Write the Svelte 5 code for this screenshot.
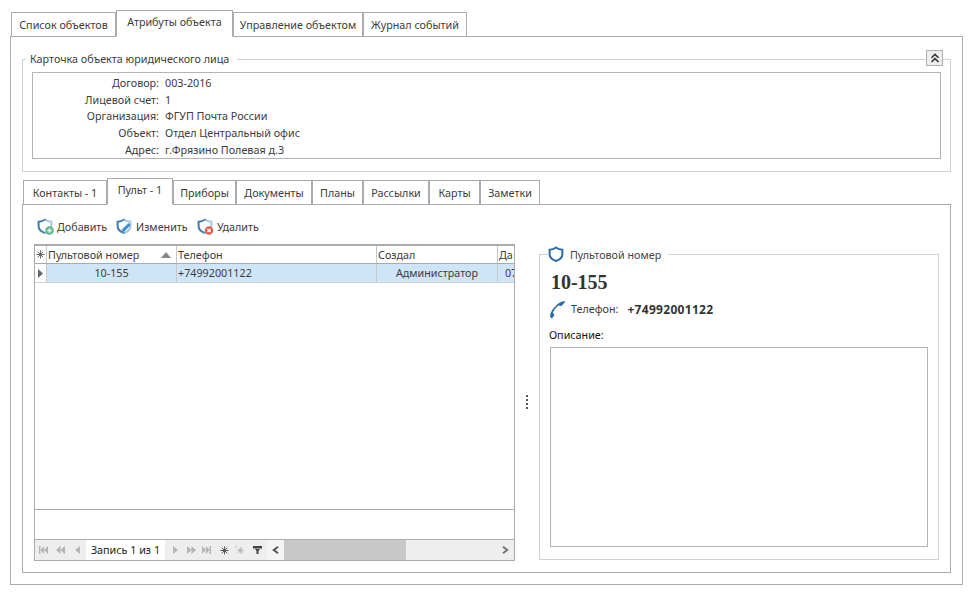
<script>
  const topTabs = [
    { t: 'Список объектов', w: 105 },
    { t: 'Атрибуты объекта', w: 117, on: true },
    { t: 'Управление объектом', w: 130 },
    { t: 'Журнал событий', w: 104 }
  ];
  const innerTabs = [
    { t: 'Контакты - 1', w: 84 },
    { t: 'Пульт - 1', w: 66, on: true },
    { t: 'Приборы', w: 63 },
    { t: 'Документы', w: 76 },
    { t: 'Планы', w: 51 },
    { t: 'Рассылки', w: 66 },
    { t: 'Карты', w: 51 },
    { t: 'Заметки', w: 60 }
  ];
  const rows = [
    ['Договор:', '003-2016'],
    ['Лицевой счет:', '1'],
    ['Организация:', 'ФГУП Почта России'],
    ['Объект:', 'Отдел Центральный офис'],
    ['Адрес:', 'г.Фрязино Полевая д.3']
  ];
  const shield = 'M8 1.500C6.200 3 3.800 3.700 1.600 3.700V8c0 3.300 2.600 5.700 6.400 7 3.800-1.300 6.400-3.700 6.400-7V3.700C12.200 3.700 9.800 3 8 1.500Z';
</script>

<div class="page">
  <svg class="defs" width="0" height="0" aria-hidden="true">
    <defs>
      <linearGradient id="sh" x1="0" y1="0" x2="1" y2="0">
        <stop offset="0.35" stop-color="#3f7cab"/>
        <stop offset="0.65" stop-color="#a8c6dc"/>
      </linearGradient>
    </defs>
  </svg>
  <div class="tabs">
    {#each topTabs as tab}
      <div class="tab" class:on={tab.on} style="width:{tab.w}px">{tab.t}</div>
    {/each}
  </div>
  <div class="panel outer">
    <fieldset class="card">
      <legend>Карточка объекта юридического лица</legend>
      <button class="collapse" aria-label="Свернуть">
        <svg width="10" height="10" viewBox="0 0 10 10" fill="none" stroke="#333" stroke-width="1.5"><path d="M1.500 4.800 5 1.400l3.500 3.400M1.500 9 5 5.600 8.500 9"/></svg>
      </button>
      <div class="info">
        {#each rows as r}
          <div class="info-row"><span class="lbl">{r[0]}</span><span>{r[1]}</span></div>
        {/each}
      </div>
    </fieldset>

    <div class="tabs inner-tabs">
      {#each innerTabs as tab}
        <div class="tab" class:on={tab.on} style="width:{tab.w}px">{tab.t}</div>
      {/each}
    </div>
    <div class="panel inner">
      <div class="toolbar">
        <span class="tool add">
          <svg width="17" height="17" viewBox="0 0 17 17"><path d={shield} fill="#fff" stroke="url(#sh)" stroke-width="2"/><circle cx="12.500" cy="12.500" r="4.200" fill="#5cb58a"/><path d="M12.500 10.300v4.400M10.300 12.500h4.400" stroke="#fff" stroke-width="1.400"/></svg>
          Добавить
        </span>
        <span class="tool edit">
          <svg width="17" height="17" viewBox="0 0 17 17"><path d={shield} fill="#fff" stroke="url(#sh)" stroke-width="2"/><path d="M5.500 14l.7-2.800 6.300-6.300 2.200 2.200-6.300 6.300z" fill="#3f8fd0"/></svg>
          Изменить
        </span>
        <span class="tool del">
          <svg width="17" height="17" viewBox="0 0 17 17"><path d={shield} fill="#fff" stroke="url(#sh)" stroke-width="2"/><circle cx="12" cy="12.500" r="4.200" fill="#e0604f"/><path d="M10.400 10.900l3.200 3.200M13.600 10.900l-3.200 3.200" stroke="#fff" stroke-width="1.400"/></svg>
          Удалить
        </span>
      </div>
      <div class="work">
        <div class="grid">
          <div class="g-head">
            <div class="c c0 star">
              <svg width="9" height="9" viewBox="0 0 9 9" stroke="#666" stroke-width="1"><path d="M4.500 0.500v8M0.500 4.500h8M1.700 1.700l5.600 5.600M7.300 1.700l-5.600 5.600"/></svg>
            </div>
            <div class="c c1 sort">Пультовой номер<svg width="10" height="6" viewBox="0 0 10 6"><path d="M5 0l5 6H0z" fill="#888"/></svg></div>
            <div class="c c2">Телефон</div>
            <div class="c c3">Создал</div>
            <div class="c c4">Да</div>
          </div>
          <div class="g-row">
            <div class="c c0 ind"><svg width="5" height="9" viewBox="0 0 5 9"><path d="M0 0l5 4.500L0 9z" fill="#666"/></svg></div>
            <div class="c c1 mid">10-155</div>
            <div class="c c2">+74992001122</div>
            <div class="c c3 mid">Администратор</div>
            <div class="c c4 clip">07</div>
          </div>
          <div class="g-body"></div>
          <div class="g-foot"></div>
          <div class="g-nav">
            <div class="nav-l">
              <svg class="n" style="margin-left:4px" width="9" height="8" viewBox="0 0 9 8" fill="#b4b4b4"><path d="M0 0h1.500v8H0zM5 0v8L1.500 4zM9 0v8L5 4z"/></svg>
              <svg class="n" style="margin-left:8px" width="9" height="8" viewBox="0 0 9 8" fill="#b4b4b4"><path d="M4.500 0v8L0 4zM9 0v8L4.500 4z"/></svg>
              <svg class="n" style="margin-left:10px" width="5" height="8" viewBox="0 0 5 8" fill="#b4b4b4"><path d="M5 0v8L0 4z"/></svg>
            </div>
            <div class="rec">Запись 1 из 1</div>
            <div class="nav-r">
              <svg class="n" style="margin-left:8px" width="5" height="8" viewBox="0 0 5 8" fill="#b4b4b4"><path d="M0 0v8l5-4z"/></svg>
              <svg class="n" style="margin-left:9px" width="9" height="8" viewBox="0 0 9 8" fill="#b4b4b4"><path d="M0 0v8l4.500-4zM4.500 0v8L9 4z"/></svg>
              <svg class="n" style="margin-left:6px" width="9" height="8" viewBox="0 0 9 8" fill="#b4b4b4"><path d="M0 0v8l3.800-4zM3.800 0v8l3.700-4zM7.500 0H9v8H7.500z"/></svg>
              <svg class="n" style="margin-left:9px" width="9" height="9" viewBox="0 0 9 9" stroke="#555" stroke-width="1"><path d="M4.500 0.500v8M0.500 4.500h8M1.700 1.700l5.600 5.600M7.300 1.700l-5.600 5.600"/></svg>
              <svg class="n" style="margin-left:6px" width="10" height="10" viewBox="0 0 10 10" stroke="#bbb" stroke-width="1"><path d="M5.500 2v7M2 5.500h7M3 3l5 5M8 3l-5 5M1 .5v2.500"/></svg>
              <svg class="n" style="margin-left:8px" width="9" height="8" viewBox="0 0 9 8" fill="#444"><path d="M0 0h9v2.500H0zM2 3h5L5.500 5v3h-2V5z"/></svg>
            </div>
            <div class="sb-btn"><svg width="7" height="8" viewBox="0 0 7 8" fill="none" stroke="#555" stroke-width="2"><path d="M6 .8 1.800 4 6 7.200"/></svg></div>
            <div class="sb-thumb"></div>
            <div class="sb-track"><svg width="7" height="8" viewBox="0 0 7 8" fill="none" stroke="#777" stroke-width="2"><path d="M1 .8 5.200 4 1 7.200"/></svg></div>
          </div>
        </div>
        <div class="splitter"><i></i><i></i><i></i><i></i></div>
        <fieldset class="detail">
          <legend>
            <svg width="16" height="17" viewBox="0 0 16 17"><path d={shield} fill="#fff" stroke="#2f6ea5" stroke-width="2"/></svg>
            <span>Пультовой номер</span>
          </legend>
          <div class="num">10-155</div>
          <div class="phone">
            <svg width="18" height="19" viewBox="0 0 18 19"><path d="M16.500 1.500c-1.500-.6-3-.4-4.700.5C7.500 4.200 3.300 9 1.500 13.500c-.5 1.500-.5 3 .2 4.300.5.500 1.300.5 2 0 .7-.8 1.300-2 1.600-3 .1-.6-.2-1-.7-1.300l-.9-.5c1-2.800 3.500-6 6.300-7.800l.8.700c.5.300 1 .3 1.500 0 1.200-.7 2.700-2.300 3.300-3.300.2-.4.200-1.300-.1-1.600z" fill="#2c6ca6"/></svg>
            <span class="p-lbl">Телефон:</span>
            <b>+74992001122</b>
          </div>
          <div class="desc-l">Описание:</div>
          <div class="desc"></div>
        </fieldset>
      </div>
    </div>
  </div>
</div>

<style>
  :global(body) { margin: 0; background: #fff; }
  .page {
    width: 953px;
    padding: 10px 0 0 10px;
    font: 10.750px "Noto Sans", "Liberation Sans", Arial, sans-serif;
    color: #3c3c3c;
    box-sizing: content-box;
  }
  .defs { position: absolute; }
  .tabs { display: flex; height: 27px; align-items: flex-end; padding-left: 1px; position: relative; z-index: 1; margin-bottom: -1px; }
  .tab {
    height: 25px; box-sizing: border-box;
    border: 1px solid #ababab;
    background: #fff; display: flex; align-items: center; justify-content: center;
    padding-top: 1px;
  }
  .tab.on { height: 27px; border-bottom-color: #fff; padding: 0 0 3px; }
  .panel { border: 1px solid #ababab; box-sizing: border-box; }
  .outer { width: 953px; height: 549px; padding: 0 11px; }
  fieldset { margin: 0; min-width: 0; box-sizing: border-box; border: 1px solid #d2d2d2; }
  .card { position: relative; width: 929px; height: 120px; margin-top: 15px; padding: 0 9px; display: block; }
  .card legend { margin-left: -6px; padding: 0 8px 0 4px; line-height: 14px; height: 14px; }
  .collapse {
    position: absolute; right: 7px; top: -16px; width: 17px; height: 16px; padding: 0;
    border: 1px solid #b0b0b0; background: #eee; display: flex; align-items: center; justify-content: center;
  }
  .info { border: 1px solid #b4b4b4; height: 87px; margin-top: 6px; box-sizing: border-box; padding-top: 1.500px; }
  .info-row { display: flex; height: 16.750px; align-items: center; gap: 6px; }
  .lbl { width: 126px; text-align: right; }
  .inner-tabs { margin-top: 6px; margin-left: 0; }
  .inner { width: 929px; height: 369px; padding: 0 11px; }
  .toolbar { display: flex; height: 39px; align-items: center; padding: 4px 0 0 3px; box-sizing: border-box; }
  .tool { display: flex; align-items: center; gap: 3px; flex: none; }
  .tool.add { width: 79px; }
  .tool.edit { width: 81px; }
  .work { display: flex; }
  .grid { width: 481px; height: 317px; border: 1px solid #ababab; border-top: 2px solid #ababab; box-sizing: border-box; display: flex; flex-direction: column; background: #fff; }
  .g-head { display: flex; height: 17px; border-bottom: 1px solid #aaa; box-sizing: content-box; flex: none; }
  .g-row { display: flex; height: 18px; background: #cde5f7; border-bottom: 1px solid #d4d4d4; box-sizing: content-box; flex: none; }
  .c { box-sizing: border-box; border-right: 1px solid #c8c8c8; display: flex; align-items: center; padding-left: 1px; overflow: hidden; white-space: nowrap; }
  .c0 { width: 12px; padding: 0; justify-content: center; background: #fff; }
  .c1 { width: 130px; }
  .c2 { width: 200px; }
  .c3 { width: 121px; }
  .c4 { flex: 1; border-right: 0; }
  .mid { justify-content: center; padding: 0; }
  .clip { padding-left: 7px; }
  .sort { justify-content: space-between; padding-right: 5px; }
  .g-body { flex: 1; border-bottom: 1px solid #ababab; }
  .g-foot { height: 29px; border-bottom: 1px solid #ababab; }
  .g-nav { height: 20px; display: flex; align-items: stretch; background: #eee; flex: none; }
  .n { flex: none; }
  .nav-l { width: 51px; display: flex; align-items: center; }
  .rec { width: 79px; background: #fff; display: flex; align-items: center; justify-content: center; color: #222; }
  .nav-r { width: 102px; display: flex; align-items: center; }
  .sb-btn { width: 17px; background: #f4f4f4; display: flex; align-items: center; justify-content: center; }
  .sb-thumb { width: 122px; background: #c8c8c8; }
  .sb-track { flex: 1; display: flex; align-items: center; justify-content: flex-end; padding-right: 5px; }
  .splitter { width: 24px; display: flex; flex-direction: column; align-items: center; justify-content: center; gap: 2px; padding-bottom: 2px; height: 317px; box-sizing: border-box; }
  .splitter i { width: 2px; height: 2px; background: #555; display: block; }
  .detail { width: 401px; height: 314px; margin-top: 2px; padding: 0 10px 0 9px; }
  .detail legend { display: flex; align-items: center; gap: 6px; padding: 0 7px 0 0; margin-left: -1px; height: 17px; color: #444; }
  .num { font: bold 20px "Liberation Serif", serif; color: #333; margin: 8px 0 0 2px; line-height: 22px; }
  .phone { display: flex; align-items: center; margin-top: 6px; height: 20px; }
  .p-lbl { margin-left: 4px; }
  .phone b { margin-left: 9px; color: #333; font-size: 12px; letter-spacing: .3px; }
  .desc-l { margin-top: 9px; line-height: 14px; color: #111; }
  .desc { margin: 5px 0 0 1px; width: 378px; height: 200px; border: 1px solid #b4b4b4; box-sizing: border-box; }
</style>
